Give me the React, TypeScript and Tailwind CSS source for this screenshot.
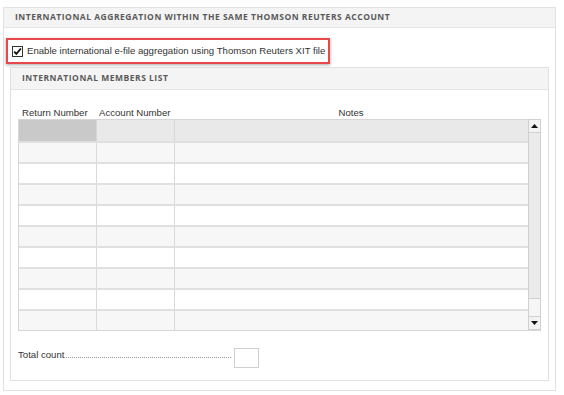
import React from 'react';

const rows = Array.from({ length: 10 }, (_, i) => i);

export default function App() {
  return (
    <div className="w-[564px] h-[395px] bg-white pt-[7px] pl-[3px] font-['Liberation_Sans',Arial,sans-serif] text-[9.6px] text-[#333] whitespace-nowrap">
      {/* Outer panel */}
      <div className="w-[553px] h-[384px] border border-[#e1e1e1] flex flex-col">
        <div className="h-[20px] bg-[#f4f4f4] border-b border-[#e4e4e4] flex items-center px-[11px] shrink-0">
          <span className="font-['Open_Sans',sans-serif] font-bold text-[8.5px] tracking-[0.06em] text-[#5a5a5a] uppercase">
            International aggregation within the same Thomson Reuters account
          </span>
        </div>

        {/* Highlighted checkbox */}
        <div className="ml-[2px] mt-[10px] w-[324px] h-[26px] border-2 border-[#e8474c] shadow-[0_1px_3px_rgba(0,0,0,0.35)] flex items-center pl-[4px] shrink-0">
          <span className="w-[11px] h-[11px] border border-[#333] bg-white flex items-center justify-center mr-[4px]">
            <svg width="9" height="9" viewBox="0 0 9 9">
              <path d="M1.2 4.6 L3.4 6.9 L7.9 1.5" fill="none" stroke="#111" strokeWidth="1.8" />
            </svg>
          </span>
          <span>Enable international e-file aggregation using Thomson Reuters XIT file</span>
        </div>

        {/* Inner panel */}
        <div className="mx-[6px] mt-[3px] h-[314px] border border-[#e1e1e1] flex flex-col">
          <div className="h-[22px] bg-[#f4f4f4] border-b border-[#e4e4e4] flex items-center px-[11px] shrink-0">
            <span className="font-['Open_Sans',sans-serif] font-bold text-[8.5px] tracking-[0.06em] text-[#5a5a5a] uppercase">
              International members list
            </span>
          </div>

          <div className="pl-[7px] pr-[7px] pt-[15px]">
            {/* Column headers */}
            <div className="flex h-[13px] items-end leading-none">
              <div className="w-[78px] pl-[4px]">Return Number</div>
              <div className="w-[78px] pl-[3px]">Account Number</div>
              <div className="w-[354px] text-center">Notes</div>
            </div>

            {/* Grid */}
            <div className="mt-[1px] flex w-[523px] border-b border-l border-[#d6d6d6]">
              <div className="flex flex-col w-[510px]">
                <div className="flex h-[22px] border-t border-[#d6d6d6]">
                  <div className="w-[78px] bg-[#c9c9c9] border-r border-[#d6d6d6]" />
                  <div className="w-[78px] bg-[#e9e9e9] border-r border-[#d6d6d6]" />
                  <div className="flex-1 bg-[#e9e9e9]" />
                </div>
                {rows.slice(1).map((i) => (
                  <div
                    key={i}
                    className={`flex h-[21px] border-t-2 border-[#e0e0e0] ${i % 2 === 1 ? 'bg-[#f7f7f7]' : 'bg-white'}`}
                  >
                    <div className="w-[78px] border-r border-[#d9d9d9]" />
                    <div className="w-[78px] border-r border-[#d9d9d9]" />
                    <div className="flex-1" />
                  </div>
                ))}
              </div>

              {/* Scrollbar */}
              <div className="w-[13px] flex flex-col border border-[#d0d0d0] bg-[#f4f4f4]">
                <div className="h-[13px] border-b border-[#d0d0d0] bg-[#f2f2f2] flex items-center justify-center">
                  <svg width="7" height="4" viewBox="0 0 7 4">
                    <path d="M0 4 L3.5 0 L7 4 Z" fill="#111" />
                  </svg>
                </div>
                <div className="h-[166px] bg-[#ebebeb] border-b border-[#d0d0d0]" />
                <div className="flex-1 bg-[#f6f6f6]" />
                <div className="h-[13px] border-t border-[#d0d0d0] bg-[#f2f2f2] flex items-center justify-center">
                  <svg width="7" height="4" viewBox="0 0 7 4">
                    <path d="M0 0 L7 0 L3.5 4 Z" fill="#111" />
                  </svg>
                </div>
              </div>
            </div>

            {/* Total count */}
            <div className="mt-[17px] flex items-end h-[20px]">
              <span className="leading-none mb-[8px]">Total count</span>
              <span className="w-[167px] border-b border-dotted border-[#999] mb-[10px]" />
              <div className="ml-[3px] w-[25px] h-[20px] border border-[#cfcfcf] bg-white" />
            </div>
          </div>
        </div>
      </div>
    </div>
  );
}
